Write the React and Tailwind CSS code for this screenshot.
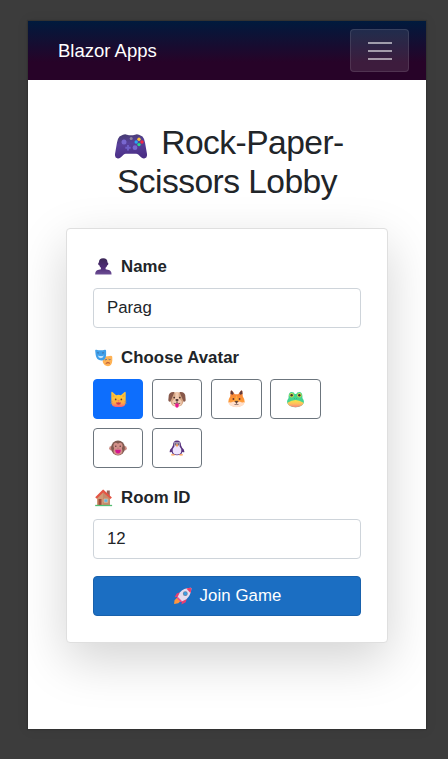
import React, { useState } from "react";

function Gamepad() {
  return (
    <svg className="h-[25px] w-8 shrink-0" viewBox="0 0 32 25">
      <defs>
        <linearGradient id="pad" x1="0" y1="0" x2="0.2" y2="1">
          <stop offset="0" stopColor="#433b6b" />
          <stop offset="0.45" stopColor="#59409c" />
          <stop offset="1" stopColor="#4b2f86" />
        </linearGradient>
      </defs>
      <path fill="url(#pad)" d="M8 .8Q10 0 12 .7L14 1.200h4L20 .7q2-.7 4 .1l3.500 1.700Q29 4 30 8.500L32 20q.3 3.500-2.200 4.300-2.300.7-4-1.300l-2.600-2.400q-1-.8-2-.8H10.800q-1.300 0-2 .8l-2.600 2.400q-1.700 2-4 1.300Q-.3 23.500 0 20L2 8.500Q3 4 4.500 2.500Z" />
      <circle cx="9" cy="8" r="2.500" fill="#7867cf" />
      <circle cx="20" cy="13.700" r="2.400" fill="#7867cf" />
      <path d="M13 11v5.400M10.300 13.700h5.400" stroke="#6f5fc6" strokeWidth="1.900" />
      <circle cx="16.200" cy="4.500" r="1.500" fill="#8d829f" />
      <circle cx="24" cy="5.300" r="1.700" fill="#f9c23c" />
      <circle cx="21.200" cy="8" r="1.700" fill="#28aaf4" />
      <circle cx="27" cy="8" r="1.700" fill="#f22845" />
      <circle cx="24" cy="10.600" r="1.700" fill="#28dc8b" />
    </svg>
  );
}

function Person() {
  return (
    <svg className="size-[17px] shrink-0" viewBox="0 0 17 17">
      <defs>
        <linearGradient id="person" x1="0" y1="0" x2="0" y2="1">
          <stop offset="0" stopColor="#3b2756" />
          <stop offset="0.6" stopColor="#512d79" />
          <stop offset="1" stopColor="#6c4f94" />
        </linearGradient>
      </defs>
      <path fill="url(#person)" d="M3.900 4.500Q4 .3 8.200.3t4.300 4.200q1 .1.800 1.400-.1 1.200-1 1.400-.5 1.500-1.700 2.500v1.400l3.200.7q2.700.8 2.700 4v.7H.2v-.7q0-3.200 2.700-4l3-.7V9.800Q4.800 8.800 4.300 7.300q-1-.2-1.100-1.400Q3 4.600 3.900 4.500Z" />
    </svg>
  );
}

function Masks() {
  return (
    <svg className="size-[18px] shrink-0" viewBox="0 0 18 18">
      <path d="M8 7.500q4.300.2 8-.7 1.400 0 1.300 1.500v3.500q-.4 5-4.300 5.500-4.100-.3-5.300-4.500Z" fill="#ffb254" />
      <path d="M.2 1.800Q0 .5 1.300.7q4.200 1.200 8.600.1 1.200-.1 1.200 1.100v4q-.3 5.300-4.700 5.700Q1.300 11 .7 6Z" fill="#3f9fe9" />
      <path d="M2 4q1-.8 2 .2M7 4.200q1-1 2-.2M9.900 10.700q1.100.5 2-.4M13.600 10.200q1 .8 1.900.3" fill="none" stroke="#416798" strokeWidth=".8" />
      <path d="M2.800 6.500q3 1 6 0-.6 2.600-3 2.700Q3.600 9 2.800 6.500Z" fill="#c6e4fb" />
      <path d="M10.700 14.500q2-2.400 4.300-.2-2.200-.7-4.300.2Z" fill="#b4583b" stroke="#b4583b" strokeWidth=".5" />
    </svg>
  );
}

function Cat() {
  return (
    <svg className="h-[17px] w-[17px]" viewBox="0 0 18 17">
      <defs>
        <linearGradient id="cat" x1="0" y1="0" x2="0" y2="1">
          <stop offset="0.4" stopColor="#ffc535" />
          <stop offset="0.75" stopColor="#ffa747" />
          <stop offset="1" stopColor="#f45b82" />
        </linearGradient>
      </defs>
      <path fill="url(#cat)" d="M1.400 1Q1.500 0 2.500.5L6.500 4q2.500-.8 5 0l4-3.500q1-.5 1.100.5v10.500q-.2 4.900-4.600 4.900H6q-4.400 0-4.600-4.900Z" />
      <path d="M2.800 2.500v4L5.300 5ZM15.200 2.500v4L12.700 5Z" fill="#f4a83f" />
      <path d="M.2 10.200l2.500.4M.2 13l2.500-.5M17.800 10.200l-2.500.4M17.800 13l-2.500-.5" stroke="#b78a5c" strokeWidth=".6" />
      <circle cx="6" cy="8.400" r=".9" fill="#6d4130" /><circle cx="12" cy="8.400" r=".9" fill="#6d4130" />
      <path d="M7.900 9.600h2.200L9 10.700Z" fill="#f04b84" />
      <path d="M6.300 11.300q1.300.8 2.700 0 1.400.8 2.700 0-.3 2.700-2.700 2.700t-2.700-2.700Z" fill="#cb3950" />
    </svg>
  );
}

function Dog() {
  return (
    <svg className="h-[17px] w-[18px]" viewBox="0 0 18 17">
      <path d="M3.500 1.500h11l1 8.500q-.3 5.500-6.500 5.500T2.500 10Z" fill="#d6a684" />
      <path d="M7.500 1h3l.3 6 3 3.500q.4 4.700-4.800 4.700t-4.800-4.700l3-3.500Z" fill="#f0cbb1" />
      <path d="M6.500 1Q2 .3.800 4L.3 9.300q.3 2 2.200 1.300L4.200 6.500ZM11.500 1Q16 .3 17.200 4l.5 5.300q-.3 2-2.200 1.300l-1.700-4.100Z" fill="#87584a" />
      <circle cx="6.200" cy="6.600" r=".9" fill="#4c3430" /><circle cx="11.800" cy="6.600" r=".9" fill="#4c3430" />
      <ellipse cx="9" cy="9" rx="1.600" ry="1" fill="#4a302e" />
      <path d="M9 9v3M5.800 12.300q1.700.9 3.200-.4 1.500 1.300 3.200.4" fill="none" stroke="#594040" strokeWidth=".8" />
      <path d="M7.300 12.600h3.400V15Q10.500 16.700 9 16.700T7.300 15Z" fill="#ea168f" />
    </svg>
  );
}

function Fox() {
  return (
    <svg className="h-[18px] w-[17px]" viewBox="0 0 17 18">
      <defs>
        <linearGradient id="fox" x1="0" y1="0" x2="0" y2="1">
          <stop offset="0" stopColor="#f47935" />
          <stop offset="0.6" stopColor="#ff9835" />
          <stop offset="1" stopColor="#ffad56" />
        </linearGradient>
      </defs>
      <path fill="url(#fox)" d="M2.700 1.300Q3 0 4 .8L6.800 4.200h3.400L13 .8q1-.8 1.300.5l.5 5.200q2 2.700 1.900 5.500-1.200 4.700-8.200 5Q1.500 16.700.3 12q-.1-2.800 1.900-5.500Z" />
      <path d="M2.700 1.300Q3 0 4 .8L5.700 3l-.8 1.700L2.500 4ZM14.300 1.300Q14 0 13 .8L11.300 3l.8 1.700L14.500 4Z" fill="#613b3c" />
      <path d="M.3 12q2.600 1 5-.5l3.200 1.200 3.200-1.200q2.400 1.500 5 .5-1.200 4.900-8.200 5.200Q1.500 16.900.3 12Z" fill="#ffe0ce" />
      <path d="M8.500 5 6.400 11.500h4.200Z" fill="#ffae42" />
      <circle cx="5.400" cy="9" r=".9" fill="#63382c" /><circle cx="11.600" cy="9" r=".9" fill="#63382c" />
      <path d="M7 11.300h3L8.500 13ZM6.500 14.500q1.300.3 2-.9.700 1.200 2 .9" fill="#493235" stroke="#493235" strokeWidth=".6" />
    </svg>
  );
}

function Frog() {
  return (
    <svg className="h-[17px] w-[17px]" viewBox="0 0 18 17">
      <defs>
        <linearGradient id="frog" x1="0" y1="0" x2="0" y2="1">
          <stop offset="0" stopColor="#f4e943" />
          <stop offset="0.55" stopColor="#ffbd60" />
          <stop offset="1" stopColor="#f5847f" />
        </linearGradient>
      </defs>
      <path d="M1.700 7Q1.200.5 5 .5q2.700 0 3.200 2.200h1.600Q10.300.5 13 .5q3.800 0 3.300 6.500 2.700 3.500 1 6Q15 16.600 9 16.600T.7 13q-1.700-2.500 1-6Z" fill="#43d391" />
      <circle cx="4.900" cy="4" r="2.300" fill="#cce04a" /><circle cx="13.100" cy="4" r="2.300" fill="#cce04a" />
      <circle cx="4.900" cy="4" r="1.300" fill="#433038" /><circle cx="13.100" cy="4" r="1.300" fill="#433038" />
      <path d="M.5 12Q5 9 9 9t8.500 3Q16.200 16.600 9 16.600T.5 12Z" fill="url(#frog)" />
      <circle cx="8" cy="7.200" r=".4" fill="#248257" /><circle cx="10" cy="7.200" r=".4" fill="#248257" />
    </svg>
  );
}

function Monkey() {
  return (
    <svg className="h-4 w-[18px]" viewBox="0 0 18 16">
      <circle cx="2.400" cy="8.300" r="2.200" fill="#c98980" /><circle cx="15.600" cy="8.300" r="2.200" fill="#c98980" />
      <ellipse cx="9" cy="7.900" rx="6.900" ry="7.500" fill="#805a50" />
      <path d="M9 3.800Q11.500 1.800 13.200 4q1.200 2.200-.3 4.300 2.300 6.400-3.900 6.700-6.200-.3-3.900-6.700Q3.600 6.200 4.800 4 6.500 1.800 9 3.800Z" fill="#d39089" />
      <circle cx="6.800" cy="6.200" r=".7" fill="#573638" /><circle cx="11.200" cy="6.200" r=".7" fill="#573638" />
      <path d="M8 8.200h.6M9.500 8.200h.6" stroke="#8b5556" strokeWidth=".6" />
      <path d="M6.200 9.700h5.600q0 3.700-2.800 3.700T6.200 9.700Z" fill="#d5168e" />
    </svg>
  );
}

function Penguin() {
  return (
    <svg className="h-4 w-[18px]" viewBox="0 0 18 16">
      <path d="M5 5.200Q5 .4 9 .4t4 4.800l1.200 2.600q2.400 1.900 2.200 4.100-.4.700-2.100 0-.7 3.300-5.300 3.300t-5.300-3.300q-1.700.7-2.100 0-.2-2.200 2.200-4.100Z" fill="#59337f" />
      <path d="M6 4q0-2 1.500-2 1 0 1.500 1 .5-1 1.500-1Q12 2 12 4l-.5 2.300q2 2.300 1.800 4.700-.2 3.600-4.300 3.600T4.700 11q-.2-2.400 1.800-4.700Z" fill="#eee4ff" />
      <path d="M6 4q0-2 1.500-2 1 0 1.500 1 .5-1 1.500-1Q12 2 12 4l-.5 1.800h-5Z" fill="#9d91a8" />
      <circle cx="7.400" cy="4" r=".6" fill="#3b2a4d" /><circle cx="10.600" cy="4" r=".6" fill="#3b2a4d" />
      <path d="M7.700 4.400h2.600L9 7.600Z" fill="#ff9838" />
      <path d="M3.700 14.800h2.500M11.800 14.800h2.500" stroke="#ff9d4d" strokeWidth="1.300" strokeLinecap="round" />
    </svg>
  );
}

function House() {
  return (
    <svg className="size-[18px] shrink-0" viewBox="0 0 18 18">
      <path d="M11.800 1.500h3v6h-3Z" fill="#976358" />
      <path d="M2 8 8 2.500 15 8.500V16H2Z" fill="#d29a76" />
      <path d="M8 3 15 8.500V16H7.800Z" fill="#c58b6c" />
      <path d="M7.500.9q.7-.6 1.300 0l8.100 7.500-1.400 1.500L8.200 3.400 1.800 9.700.2 8.200Z" fill="#e45545" />
      <path d="M3.500 10h3v6h-3Z" fill="#a04a3b" />
      <path d="M9 10h3.800v3.300H9Z" fill="#5bb8e6" stroke="#e8c09d" strokeWidth=".7" />
      <path d="M.2 16.500h16.900" stroke="#54bd72" strokeWidth="1.300" />
    </svg>
  );
}

function Rocket() {
  return (
    <svg className="size-[18px] shrink-0" viewBox="0 0 18 18">
      <path d="M6 5.200 2.700 6.600.6 10.300l4.200-.4M12.800 11.700l-1.100 3.600-4.200 2.200.6-4.600" fill="#e63e72" />
      <path d="M3 10.700.5 13.200.1 17l4.200-.8 3-3Z" fill="#ff963d" />
      <path d="M5.800 5.400Q9.500 1 16.600.7q.9 0 .8.800-.5 6.800-5 10.700l-4.800 2.400-4.200-4.200Z" fill="#e5dcef" />
      <path d="M12.300 1.500Q14.800.7 16.800.7q.6.100.6.700-.1 2.500-1 4.500Z" fill="#ef3e69" />
      <path d="m3.700 9.700 4.700 4.700-1.500.8-4-4Z" fill="#f04c8c" />
      <circle cx="11.300" cy="6.700" r="2.400" fill="#6882a0" /><circle cx="11.400" cy="6.600" r="1.500" fill="#399eea" />
    </svg>
  );
}

const avatars = [
  { name: "Cat", Icon: Cat },
  { name: "Dog", Icon: Dog },
  { name: "Fox", Icon: Fox },
  { name: "Frog", Icon: Frog },
  { name: "Monkey", Icon: Monkey },
  { name: "Penguin", Icon: Penguin },
];

const labelClass = "flex h-[25px] items-center gap-[8px] pl-[2px] text-[16.8px] font-bold tracking-[0.08px]";
const inputClass =
  "block h-10 w-full rounded-[4px] border border-[#ced4da] bg-white px-[13px] text-[16.8px] text-[#212529] outline-none";

export default function App() {
  const [selected, setSelected] = useState("Cat");
  const [name, setName] = useState("Parag");
  const [room, setRoom] = useState("12");

  return (
    <div className="h-[759px] w-[448px] overflow-hidden bg-[#3c3c3c] pt-[21px] pl-7 font-['Liberation_Sans',Arial,sans-serif] text-[#212529]">
      <main className="h-[708px] w-[398px] overflow-hidden bg-white shadow-[0_0_12px_rgba(0,0,0,0.08),0_0_1px_1px_rgba(0,0,0,0.12)]">
        <nav className="flex h-[59px] items-center justify-between bg-[linear-gradient(180deg,#001a3d_0%,#270328_70%)] pr-[17px] pl-[30px]">
          <a className="text-[18.5px] text-white">Blazor Apps</a>
          <button aria-label="Menu" className="flex h-[43px] w-[59px] flex-col items-center justify-center gap-[6px] rounded-[4px] border border-white/10 bg-white/10">
            <span className="h-[2px] w-6 bg-white/55" />
            <span className="h-[2px] w-6 bg-white/55" />
            <span className="h-[2px] w-6 bg-white/55" />
          </button>
        </nav>

        <h1 className="mt-[43px] flex flex-col items-center text-[33.6px] leading-[39px] tracking-[-0.55px]">
          <span className="flex items-center gap-[14px] pl-[5px] whitespace-nowrap">
            <span className="pt-[8px]"><Gamepad /></span>
            Rock-Paper-
          </span>
          <span className="whitespace-nowrap">Scissors Lobby</span>
        </h1>

        <section className="mt-[27px] ml-[38px] h-[415px] w-[322px] rounded-[4px] border border-[#dfdfdf] bg-white px-[26px] pt-[25px] shadow-[0_17px_50px_rgba(0,0,0,0.175)]">
          <label className={labelClass}><Person /><span className="ml-px">Name</span></label>
          <input className={inputClass + " mt-[9px]"} value={name} onChange={(e) => setName(e.target.value)} />

          <div className={labelClass + " mt-[17px]"}><Masks />Choose Avatar</div>
          <div className="mt-[9px] flex flex-wrap gap-x-[8.700px] gap-y-[9px]">
            {avatars.map(({ name: label, Icon }) => (
              <button
                key={label}
                aria-label={label}
                onClick={() => setSelected(label)}
                className={
                  "flex h-10 w-[50.400px] items-center justify-center rounded-[4px] border " +
                  (selected === label ? "border-[#0d6efd] bg-[#0d6efd]" : "border-[#6c757d] bg-white")
                }
              >
                <Icon />
              </button>
            ))}
          </div>

          <label className={labelClass + " mt-[17px]"}><House />Room ID</label>
          <input className={inputClass + " mt-[9px]"} value={room} onChange={(e) => setRoom(e.target.value)} />

          <button className="mt-[17px] flex h-10 w-full items-center justify-center gap-[7px] rounded-[4px] border border-[#1861ac] bg-[#1b6ec2] pl-[2px] text-[16.8px] tracking-[0.1px] text-white">
            <Rocket />Join Game
          </button>
        </section>
      </main>
    </div>
  );
}
